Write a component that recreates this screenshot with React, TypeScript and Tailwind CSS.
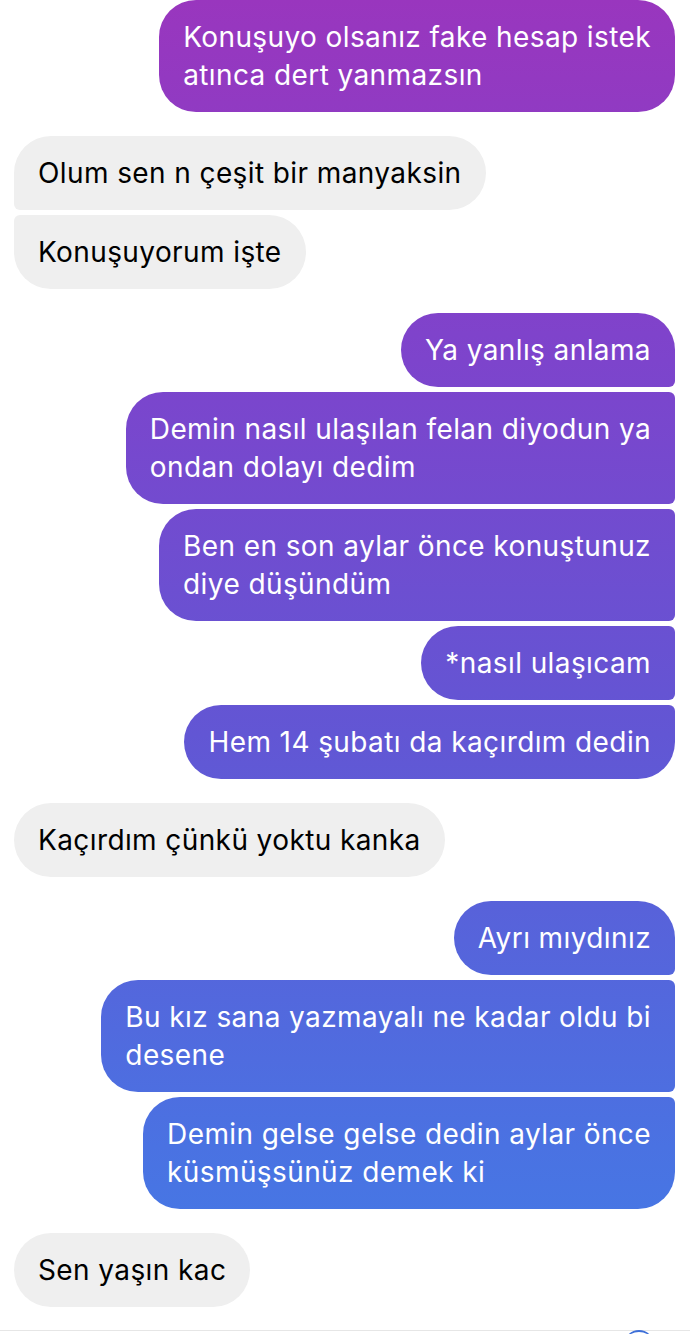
import React from 'react';

type Msg = {
  lines: string[];
  mine: boolean;
  corners: string;
};

const BIG = 'rounded-[37px]';

const messages: { mine: boolean; items: string[][] }[] = [
  { mine: true, items: [['Konuşuyo olsanız fake hesap istek', 'atınca dert yanmazsın']] },
  { mine: false, items: [['Olum sen n çeşit bir manyaksin'], ['Konuşuyorum işte']] },
  {
    mine: true,
    items: [
      ['Ya yanlış anlama'],
      ['Demin nasıl ulaşılan felan diyodun ya', 'ondan dolayı dedim'],
      ['Ben en son aylar önce konuştunuz', 'diye düşündüm'],
      ['*nasıl ulaşıcam'],
      ['Hem 14 şubatı da kaçırdım dedin'],
    ],
  },
  { mine: false, items: [['Kaçırdım çünkü yoktu kanka']] },
  {
    mine: true,
    items: [
      ['Ayrı mıydınız'],
      ['Bu kız sana yazmayalı ne kadar oldu bi', 'desene'],
      ['Demin gelse gelse dedin aylar önce', 'küsmüşsünüz demek ki'],
    ],
  },
  { mine: false, items: [['Sen yaşın kac']] },
];

function cornerClass(mine: boolean, i: number, n: number) {
  if (n === 1) return '';
  const first = i === 0;
  const last = i === n - 1;
  if (mine) {
    if (first) return 'rounded-br-[6px]';
    if (last) return 'rounded-tr-[6px]';
    return 'rounded-tr-[6px] rounded-br-[6px]';
  }
  if (first) return 'rounded-bl-[6px]';
  if (last) return 'rounded-tl-[6px]';
  return 'rounded-tl-[6px] rounded-bl-[6px]';
}

// gradient is pinned to the screen, like instagram does
const Bubble: React.FC<Msg> = ({ lines, mine, corners }) => (
  <div
    className={`${BIG} ${corners} px-6 py-[18px] text-[28px] leading-[38px] tracking-[0.4px] whitespace-nowrap ${
      mine
        ? 'self-end bg-fixed bg-[linear-gradient(to_bottom,#9936be_0%,#7d44cc_27%,#6256d4_55%,#4a72e2_86%,#417de7_100%)] text-white'
        : 'self-start bg-[#efefef] text-black'
    }`}
  >
    {lines.map((l, k) => (
      <div key={k}>{l}</div>
    ))}
  </div>
);

export default function App() {
  return (
    <div
      className="relative h-[1334px] w-[690px] overflow-hidden bg-white"
      style={{ fontFamily: 'Inter, "Noto Sans", sans-serif' }}
    >
      <div className="flex flex-col gap-6 pl-[14px] pr-[15px]">
        {messages.map((g, gi) => (
          <div key={gi} className="flex flex-col gap-[5px]">
            {g.items.map((lines, i) => (
              <Bubble
                key={i}
                lines={lines}
                mine={g.mine}
                corners={cornerClass(g.mine, i, g.items.length)}
              />
            ))}
          </div>
        ))}
      </div>
      <div className="absolute bottom-0 left-0 right-0 h-[4px] border-t border-[#e6e6e6]">
        <div className="absolute right-[36px] top-[-1px] h-10 w-[30px] rounded-full border-t-2 border-[#3d6fd8]" />
      </div>
    </div>
  );
}
